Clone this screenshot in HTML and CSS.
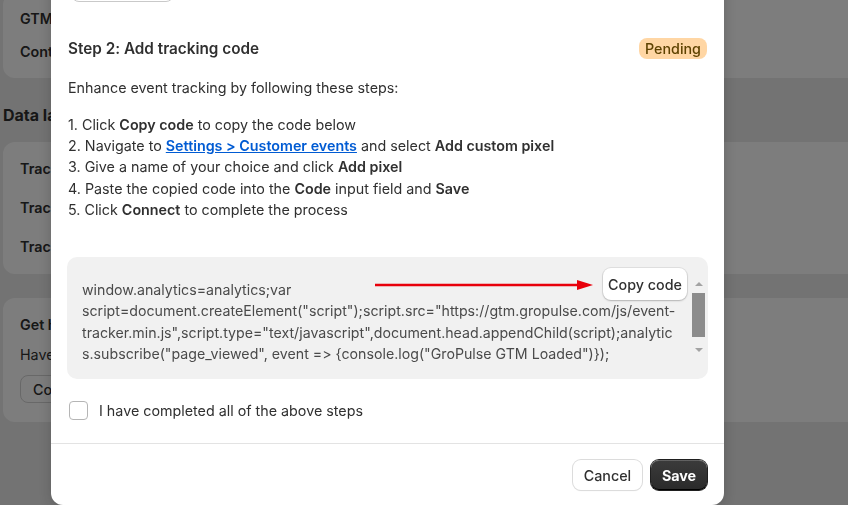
FILE: index.html
```html
<!DOCTYPE html>
<html lang="en">
<head>
<meta charset="utf-8">
<title>Add tracking code</title>
<link rel="stylesheet" href="styles.css">
</head>
<body>
<div class="page">
  <section class="card card-top">
    <div class="row strong">GTM ID</div>
    <div class="row strong">Container</div>
  </section>
  <h2 class="page-heading">Data layer</h2>
  <section class="card card-events">
    <div class="row strong">Tracking</div>
    <div class="row strong">Tracking</div>
    <div class="row strong">Tracking</div>
  </section>
  <section class="card card-help">
    <div class="row strong">Get help</div>
    <div class="row">Have questions?</div>
    <div><button class="bg-btn">Contact us</button></div>
  </section>
</div>

<div class="backdrop"></div>

<div class="modal">
  <div class="modal-body">
    <button class="top-btn"></button>
    <div class="step-head">
      <h3 class="step-title">Step 2: Add tracking code</h3>
      <span class="badge">Pending</span>
    </div>
    <p class="intro">Enhance event tracking by following these steps:</p>
    <ol class="steps">
      <li>1. Click <b>Copy code</b> to copy the code below</li>
      <li>2. Navigate to <a class="link" href="#">Settings &gt; Customer events</a> and select <b>Add custom pixel</b></li>
      <li>3. Give a name of your choice and click <b>Add pixel</b></li>
      <li>4. Paste the copied code into the <b>Code</b> input field and <b>Save</b></li>
      <li>5. Click <b>Connect</b> to complete the process</li>
    </ol>
    <div class="code-box">
      <div class="code-text">
        <div>window.analytics=analytics;var</div>
        <div>script=document.createElement("script");script.src="https://gtm.gropulse.com/js/event-</div>
        <div>tracker.min.js",script.type="text/javascript",document.head.appendChild(script);analytic</div>
        <div>s.subscribe("page_viewed", event =&gt; {console.log("GroPulse GTM Loaded")});</div>
      </div>
      <div class="scrollbar">
        <span class="arrow up"></span>
        <span class="thumb"></span>
        <span class="arrow down"></span>
      </div>
      <svg class="red-arrow" width="222" height="12" viewBox="0 0 222 12">
        <line x1="0" y1="6" x2="206" y2="6" stroke="#e8000b" stroke-width="2.6"/>
        <polygon points="202,1 218,6 202,11" fill="#e8000b"/>
      </svg>
      <button class="copy-btn">Copy code</button>
    </div>
    <label class="check-row">
      <span class="checkbox"></span>
      <span>I have completed all of the above steps</span>
    </label>
  </div>
  <div class="modal-footer">
    <button class="btn btn-cancel">Cancel</button>
    <button class="btn btn-save">Save</button>
  </div>
</div>
</body>
</html>
```

FILE: styles.css
```css
* { box-sizing: border-box; }
html, body { margin: 0; padding: 0; }
body {
  width: 848px;
  height: 505px;
  overflow: hidden;
  background: #ebebeb;
  font-family: Inter, "Noto Sans", "Liberation Sans", sans-serif;
  font-size: 14.3px;
  color: #303030;
  font-variant-ligatures: none;
  font-feature-settings: "calt" 0, "liga" 0;
}

/* background page (mostly hidden behind the dialog) */
.page {
  width: 848px;
  padding-left: 3px;
  margin-top: -7px;
}
.card {
  background: #fff;
  border-radius: 12px 0 0 12px;
  padding: 16px 17px;
  display: flex;
  flex-direction: column;
}
.row { line-height: 20px; height: 20px; white-space: nowrap; }
.strong { font-weight: 600; }
.card-top { gap: 13px; padding-bottom: 16px; }
.page-heading {
  margin: 27px 0 17px;
  font-size: 16px;
  line-height: 20px;
  font-weight: 700;
  white-space: nowrap;
}
.card-events { gap: 19px; padding: 17px 17px; }
.card-help { margin-top: 24px; gap: 10px; padding: 17px 17px 19px; }
.bg-btn {
  font: inherit;
  font-weight: 500;
  height: 28px;
  padding: 0 12px;
  border: 1px solid #d4d4d4;
  border-radius: 8px;
  background: #fff;
  color: #303030;
  white-space: nowrap;
}

.backdrop {
  position: fixed;
  inset: 0;
  background: rgba(0, 0, 0, 0.51);
}

/* modal */
.modal {
  position: fixed;
  left: 51px;
  top: -30px;
  bottom: 0;
  width: 673px;
  background: #fff;
  border-radius: 12px;
  display: flex;
  flex-direction: column;
  box-shadow: 0 4px 16px rgba(0,0,0,0.2);
}
.modal-body {
  padding: 4px 16px 23px;
  display: flex;
  flex-direction: column;
}
.top-btn {
  margin-left: 4px;
  width: 103px;
  height: 28px;
  border: 1px solid #c9c9c9;
  border-radius: 8px;
  background: #fff;
}
.step-head {
  margin-top: 36px;
  height: 21px;
  display: flex;
  align-items: center;
  justify-content: space-between;
}
.step-title {
  margin: 0 0 0 1px;
  font-size: 15.3px;
  line-height: 20px;
  font-weight: 600;
}
.badge {
  width: 68px;
  height: 21px;
  border-radius: 8px;
  background: #ffd6a4;
  color: #5e4200;
  line-height: 21px;
  text-align: center;
  font-weight: 500;
  margin-right: 1px;
}
.intro {
  margin: 18px 0 0 1px;
  line-height: 21px;
}
.steps {
  list-style: none;
  margin: 16px 0 0 1px;
  padding: 0;
  line-height: 21.2px;
}
.steps b { font-weight: 600; }
.link {
  color: #005bd3;
  font-weight: 600;
  text-decoration: underline;
}

.code-box {
  position: relative;
  margin-top: 37px;
  height: 122px;
  background: #f1f1f1;
  border-radius: 10px;
  display: flex;
  padding: 0 2px 0 15px;
}
.code-text {
  flex: 1;
  padding-top: 22px;
  font-size: 14.2px;
  line-height: 21.3px;
  color: #4a4a4a;
  white-space: nowrap;
  overflow: hidden;
}
.scrollbar {
  margin-top: 22px;
  width: 15px;
  height: 76px;
  display: flex;
  flex-direction: column;
  align-items: center;
}
.arrow {
  width: 0;
  height: 0;
  border-left: 4px solid transparent;
  border-right: 4px solid transparent;
}
.arrow.up { border-bottom: 4px solid #a3a3a3; margin-top: 3px; }
.arrow.down { border-top: 4px solid #a3a3a3; margin-top: auto; margin-bottom: 3px; }
.thumb {
  margin-top: 7px;
  width: 13px;
  height: 44px;
  background: #8c8c8c;
}
.red-arrow {
  position: absolute;
  left: 308px;
  top: 22px;
}
.copy-btn {
  position: absolute;
  top: 11px;
  right: 21px;
  width: 84px;
  height: 32px;
  padding: 0;
  white-space: nowrap;
  font: inherit;
  font-weight: 500;
  color: #303030;
  background: #fff;
  border: none;
  border-radius: 8px;
  box-shadow: 0 1px 2px rgba(0,0,0,0.2), 0 0 0 1px rgba(0,0,0,0.07);
}

.check-row {
  margin-top: 22px;
  display: flex;
  align-items: center;
  gap: 11px;
  line-height: 19px;
}
.checkbox {
  margin-left: 2px;
  width: 19px;
  height: 19px;
  border: 1px solid #b5b5b5;
  border-radius: 4px;
  background: #fff;
}

.modal-footer {
  margin-top: auto;
  border-top: 1px solid #e3e3e3;
  padding: 16px 17px 15px 16px;
  display: flex;
  justify-content: flex-end;
  gap: 9px;
}
.btn {
  height: 30px;
  font: inherit;
  border-radius: 8px;
  padding: 0;
  white-space: nowrap;
}
.btn-cancel {
  width: 69px;
  font-weight: 500;
  color: #303030;
  background: #fff;
  border: none;
  box-shadow: 0 0 0 1px #dcdcdc, 0 1px 1px rgba(0,0,0,0.12);
}
.btn-save {
  width: 56px;
  font-weight: 700;
  color: #fff;
  border: none;
  background: linear-gradient(#3b3b3b, #2a2a2a);
  box-shadow: inset 0 -1px 0 #000, 0 0 0 1px #1f1f1f, inset 0 1px 0 rgba(255,255,255,0.2);
}
```
